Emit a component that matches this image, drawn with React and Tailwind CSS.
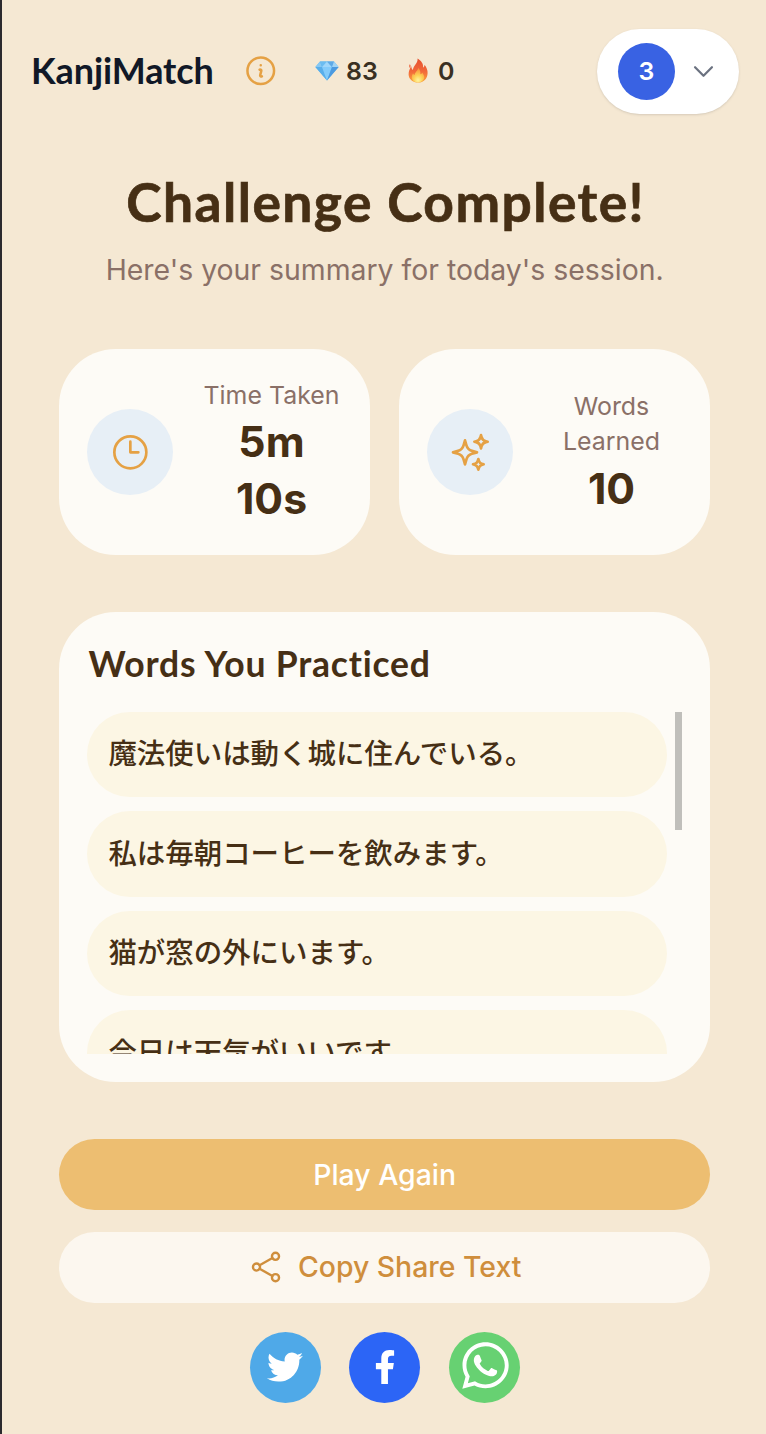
import React from "react";
import {
  HiOutlineInformationCircle,
  HiOutlineClock,
  HiOutlineSparkles,
  HiOutlineChevronDown,
} from "react-icons/hi2";
import { IoShareSocialOutline } from "react-icons/io5";
import { FaTwitter, FaFacebookF, FaWhatsapp } from "react-icons/fa";

const words = [
  "魔法使いは動く城に住んでいる。",
  "私は毎朝コーヒーを飲みます。",
  "猫が窓の外にいます。",
  "今日は天気がいいです。",
];

const stats = [
  { label: "Time Taken", value: "5m 10s", icon: HiOutlineClock },
  { label: "Words Learned", value: "10", icon: HiOutlineSparkles },
];

const socials = [
  { name: "Twitter", icon: FaTwitter, color: "bg-[#4fa9e8]", size: "size-[36px]" },
  { name: "Facebook", icon: FaFacebookF, color: "bg-[#2c65f6]", size: "size-[34px]" },
  { name: "WhatsApp", icon: FaWhatsapp, color: "bg-[#67d172]", size: "size-[53px] ml-[3px] -mt-1" },
];

const Gem = () => (
  <svg viewBox="0 0 24 20" className="w-6 h-5" aria-hidden="true">
    <path d="M5 0.5h14l4.6 5.4L12 19.6 0.4 5.9z" fill="#5fb6f0" />
    <path d="M5 0.5L7 6H0.4z" fill="#86c8f3" />
    <path d="M5 0.5h7L7 6z" fill="#6bbcf0" />
    <path d="M12 0.5L17 6H7z" fill="#9ed6fa" />
    <path d="M12 0.5h7L17 6z" fill="#5fa9e6" />
    <path d="M19 0.5l4.6 5.4L17 6z" fill="#a0d3f5" />
    <path d="M0.4 6H7l5 13.6z" fill="#58aeea" />
    <path d="M7 6h10l-5 13.6z" fill="#83cbfa" />
    <path d="M17 6h6.6L12 19.6z" fill="#4c9ae0" />
  </svg>
);

const Flame = () => (
  <svg viewBox="0 0 20 25" className="w-5 h-[25px]" aria-hidden="true">
    <defs>
      <linearGradient id="flame" x1="0" y1="0" x2="0" y2="1">
        <stop offset="0" stopColor="#e5502f" />
        <stop offset="0.55" stopColor="#f2693a" />
        <stop offset="1" stopColor="#fba63c" />
      </linearGradient>
      <radialGradient id="core" cx="0.5" cy="0.85" r="0.75">
        <stop offset="0" stopColor="#fff3a0" />
        <stop offset="0.45" stopColor="#fdd257" />
        <stop offset="1" stopColor="#f99a3e" />
      </radialGradient>
    </defs>
    <path
      d="M9.600 0.400c4 2.300 6 5.600 5.400 9.300 1-.6 1.500-1.700 1.500-2.900 2.200 2.700 3.200 5.500 3.100 8.400-.2 5.500-4 9.400-9.400 9.400S.6 21.200.6 16.200c0-3.200 1.200-5.700 2.700-8 .1 1.800.6 3 1.600 3.700C5.300 7.200 9.800 5.900 9.600.4z"
      fill="url(#flame)"
    />
    <path d="M1.700 6.200c1.200 1 1.200 2.600.2 3.700-1-1.100-1-2.500-.2-3.700z" fill="#ee6b45" />
    <path
      d="M10.200 10c2.200 2 2.400 4.700 2.100 6.300 1-.2 1.600-.9 1.900-1.800 1.300 1.900 2.300 3.500 2 5.300-.5 3-3.300 4.600-6.200 4.600-3.200 0-6.100-1.900-6.200-4.900-.1-1.600.5-3 1.300-4.200.3 1 .8 1.500 1.500 1.700-.1-2.500 3.300-4.300 3.600-7z"
      fill="url(#core)"
    />
  </svg>
);

const Header = () => (
  <header className="flex items-center h-[85px] mt-[28.500px] pl-[29px] pr-[27px]">
    <h1 className="w-[214.500px] -mt-[3px] font-['Lato'] font-bold text-[36px] leading-none tracking-[-0.100px] text-[#111827]">
      KanjiMatch
    </h1>
    <HiOutlineInformationCircle strokeWidth={1.7} className="size-[35.500px] -ml-[3px] text-[#e5a144]" />
    <div className="flex items-center ml-[37px] text-[24.900px] font-semibold text-[#3a3022]">
      <Gem />
      <span className="ml-[7px] mt-[2px] w-[62px]">83</span>
      <Flame />
      <span className="ml-[10px] mt-[2px]">0</span>
    </div>
    <button className="ml-auto flex items-center w-[142px] h-[85px] pl-[21px] rounded-[43px] bg-white shadow-sm">
      <span className="flex items-center justify-center size-[57px] rounded-full bg-[#3962e3] text-white text-[24.900px] font-semibold">
        <span className="mt-px">3</span>
      </span>
      <HiOutlineChevronDown strokeWidth={2} className="ml-[14.500px] size-[27px] text-[#6b7280]" />
    </button>
  </header>
);

const StatCard = ({ label, value, icon: Icon }) => (
  <div className="flex items-center w-[311.300px] h-[206px] px-[28.400px] rounded-[57px] bg-[#fdfbf6]">
    <div className="flex items-center justify-center size-[85.300px] shrink-0 rounded-full bg-[#e7eff6]">
      <Icon className="size-[42.700px] text-[#e5a144]" />
    </div>
    <div className="flex-1 ml-[28.400px] text-center">
      <p className="pt-px text-[24.900px] leading-[35.500px] text-[#8a7067]">{label}</p>
      <p className="px-3 text-[42.700px] leading-[57px] font-bold text-[#462f15]">{value}</p>
    </div>
  </div>
);

export default function App() {
  return (
    <div className="flex flex-col min-h-[1434px] overflow-hidden border-l-2 border-[#2b2a2e] bg-[#f5e8d3] font-['Inter','Noto_Sans_CJK_JP',sans-serif]">
      <Header />

      <main className="ml-[57px] w-[651.300px]">
        <div className="mt-[55px] -mx-6 text-center whitespace-nowrap">
          <h2 className="pl-[2px] font-['Lato'] font-bold text-[53.300px] leading-[64px] tracking-[1.450px] [-webkit-text-stroke:0.700px_#462f15] text-[#462f15]">
            Challenge Complete!
          </h2>
          <p className="mt-[15px] text-[28.400px] leading-[43px] text-[#8a7067]">
            Here's your summary for today's session.
          </p>
        </div>

        {/* Session stats */}
        <div className="flex justify-between mt-[58.500px]">
          {stats.map((stat) => (
            <StatCard key={stat.label} {...stat} />
          ))}
        </div>

        {/* Practiced words */}
        <section className="mt-[57px] h-[470px] p-[28.400px] rounded-[57px] bg-[#fdfbf6]">
          <h3 className="h-[71.500px] pt-[2px] pl-px font-['Lato'] font-bold text-[35.500px] leading-[43px] tracking-[0.800px] text-[#462f15]">
            Words You Practiced
          </h3>
          <div className="flex justify-between h-[342px] overflow-hidden">
            <ul className="flex flex-col gap-[14.200px] w-[580px]">
              {words.map((word) => (
                <li
                  key={word}
                  className="flex items-center h-[85.300px] shrink-0 px-[21px] rounded-full bg-[#fcf6e4] text-[28.440px] font-medium text-[#462f15]"
                >
                  {word}
                </li>
              ))}
            </ul>
            <div className="w-[7px] h-[118px] bg-[#c0bfbb]" />
          </div>
        </section>

        {/* Actions */}
        <div className="mt-[57px] flex flex-col gap-[21.500px] text-[28.400px] font-medium">
          <button className="h-[71px] pt-px rounded-full bg-[#edbe71] text-white">Play Again</button>
          <button className="flex items-center justify-center gap-[13px] h-[71px] pr-px rounded-full bg-[#fcf7ef] text-[#cf8e3c]">
            <IoShareSocialOutline className="size-[38px]" />
            Copy Share Text
          </button>
        </div>

        <div className="mt-[29px] flex justify-center gap-[28.400px]">
          {socials.map(({ name, icon: Icon, color, size }) => (
            <button
              key={name}
              aria-label={name}
              className={`flex items-center justify-center size-[71px] rounded-full text-white ${color}`}
            >
              <Icon className={size} />
            </button>
          ))}
        </div>
      </main>
    </div>
  );
}
